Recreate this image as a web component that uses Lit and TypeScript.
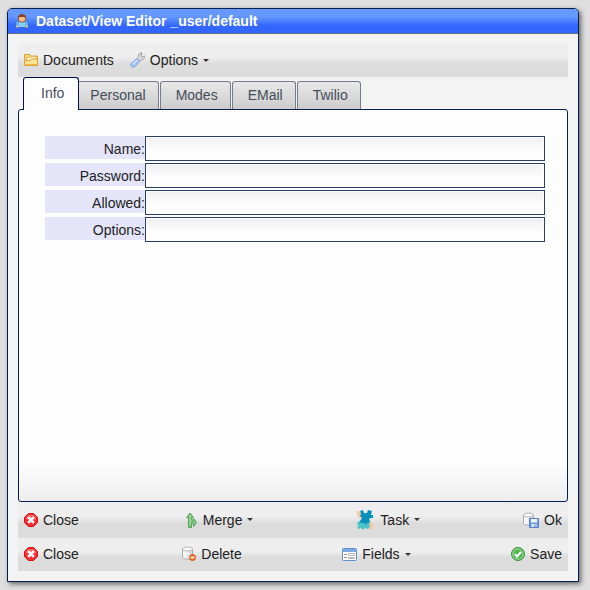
import { LitElement, html, svg, css, nothing, TemplateResult, SVGTemplateResult } from "lit";
import { customElement, property, state } from "lit/decorators.js";
import { classMap } from "lit/directives/class-map.js";

const art: Record<string, SVGTemplateResult> = {
  user: svg`
    <path d="M.5 12V9.500C.5 7.500 2 6.500 4.500 6.500h5c2.500 0 4 1 4 3V12l-2 1.500h-9z" fill="#62b4f7" stroke="#2672d2"/>
    <path d="M4.500 7h5L7 9.500z" fill="#f4c79c"/>
    <path d="M1 12.500h2.500M10.500 12.500H13" stroke="#e9b384" stroke-width="2"/>
    <path d="M4 8h6v5H4z" fill="#8accfb"/>
    <rect x="3.500" y="1" width="7" height="7" rx="2.500" fill="#f2bd8d" stroke="#94562c"/>
    <path d="M3 5V2.500Q4 0 7 0t4 2.500V5L9.500 3h-5z" fill="#86431f"/>`,
  folder: svg`
    <path d="M.5 12V1.500h5l1 1.500h7v9.500H.5z" fill="#f9d978" stroke="#d9a03f"/>
    <path d="M2.500 9V4.500H7l1-1h4v5" fill="#fff8dc" stroke="#e3b95b"/>
    <path d="M.5 12.500V7.500h6l1-1.500h6v6.500z" fill="#fbe391" stroke="#dca23d"/>
    <path d="M2 11.500h11" stroke="#f0b640"/>`,
  wrench: svg`
    <path d="M6.500 7.500l2-2C7.500 3 9.500.5 12 1l-1 2 .5 1.500 2 .5L15 3.500c.5 2.500-2 4.500-4.500 4.500l-2 2z" fill="#dcdcdc" stroke="#999"/>
    <path d="M7 6.500l2.800 2.800-5 5.400c-2.300 1.500-5-1-3.600-3.200z" fill="#a5c4f4" stroke="#7ea3de"/>
    <path d="M3 12l4.200-4" stroke="#d3e3ff" stroke-width="1.500"/>`,
  close: svg`
    <path d="M4.500.5h5l4 4v5l-4 4h-5l-4-4v-5z" fill="#f42f32" stroke="#e00c12"/>
    <path d="M4.500 2h5L12 4.500v2H2v-2z" fill="#fa6260"/>
    <path d="M4.200 4.200l5.600 5.600m0-5.600L4.200 9.800" stroke="#fff" stroke-width="2.500"/>`,
  merge: svg`
    <path d="M3.500 15.500v-10h-2L5 1l3.500 4.500h-2V7l2 2V6.500l3 4-3 4v-2.500l-2-1v4.500z" fill="#7fc684" stroke="#55a35c"/>
    <path d="M5 3v11" stroke="#a5dba5"/>`,
  data: svg`
    <path d="M.5 3v8c0 3 10 3 10 0V3z" fill="#ededed" stroke="#aaa"/>
    <path d="M2.500 4v8" stroke="#fff" stroke-width="2"/>
    <path d="M8.500 5v7" stroke="#d0d0d0" stroke-width="2"/>
    <ellipse cx="5.500" cy="3" rx="5" ry="2" fill="#fafafa" stroke="#b5b5b5"/>`,
  remove: svg`
    <circle cx="10.500" cy="11.500" r="3" fill="#f0752a" stroke="#d95511"/>
    <path d="M8.500 11.500h4" stroke="#fff" stroke-width="1.500"/>`,
  disk: svg`
    <path d="M6.500 6.500h9v9h-9z" fill="#6798e6" stroke="#5a86d0"/>
    <path d="M8 7h6v3.500H8z" fill="#f2f7ff"/>
    <path d="M8.500 12h5v3h-5z" fill="#e1edff"/>
    <path d="M12 12.500V15" stroke="#4171bd"/>`,
  puzzle: svg`
    <path d="M0 1l3 0 3 4-1 4-3-2zM13 11l4 2v4l-3 3-3-3z" fill="#f6c5a2"/>
    <path d="M2 12l3-2 9 0 0 3-1 1 1 3-2 2-3-1-2 2-2-2-3 1-1-2 2-1-2-2z" fill="#4fc1c8"/>
    <path d="M4 1l3-1 1 3h3l1-3 4 1-1 4 2 0v3l-3 0-1 2 1 2-3 1-1 2-2-2-3 0-1-2 2-3-2-2 1-2z" fill="#0891bb"/>`,
  form: svg`
    <rect x=".5" y=".5" width="14" height="12" rx="1" fill="#fff" stroke="#5c8fd0"/>
    <path d="M1 2.500h13" stroke="#7caae4" stroke-width="3"/>
    <path d="M2 6.500h3M2 9.500h3" stroke="#8f8f8f"/>
    <path d="M6.500 5.500h6v2h-6zM6.500 9.500h6v1h-6z" fill="#fff" stroke="#b5b5b5"/>`,
  check: svg`
    <circle cx="7" cy="7" r="6.500" fill="#56b652" stroke="#389240"/>
    <circle cx="7" cy="7" r="5.200" fill="none" stroke="#a8dca0"/>
    <path d="M4 7l2 2.500L10 5" fill="none" stroke="#fff" stroke-width="2"/>`,
};

function icon(names: string[], width: number, height: number): TemplateResult {
  return html`<svg width=${width} height=${height} viewBox="0 0 ${width} ${height}" aria-hidden="true">
    ${names.map((n) => art[n])}
  </svg>`;
}

interface Action {
  label: string;
  icon: TemplateResult;
  menu?: boolean;
}

@customElement("tool-bar")
class ToolBar extends LitElement {
  @property({ attribute: false }) actions: Action[] = [];
  @property({ type: Boolean, reflect: true }) spread = false;

  static styles = css`
    :host {
      display: flex;
      align-items: center;
      gap: 16px;
      box-sizing: border-box;
      min-height: 33px;
      padding: 0 6px 1px;
      background: linear-gradient(#eeeeee 40%, #dcdcdc 60%);
    }
    :host([spread]) {
      justify-content: space-between;
    }
    button {
      display: flex;
      flex: none;
      align-items: center;
      gap: 5px;
      padding: 0;
      border: 0;
      background: none;
      color: #222;
      font: 14px/20px "Liberation Sans", Arial, sans-serif;
    }
    :host([spread]) button:first-child {
      padding-right: 3px;
    }
    svg {
      display: block;
      flex: none;
    }
    .caret {
      border: 3px solid transparent;
      border-top-color: #333;
      border-bottom: 0;
    }
  `;

  render() {
    return this.actions.map(
      (a) => html`<button type="button">
        ${a.icon}<span>${a.label}</span>${a.menu ? html`<span class="caret"></span>` : nothing}
      </button>`
    );
  }
}

@customElement("app-root")
class AppRoot extends LitElement {
  @state() private tab = "Info";

  private tabs = ["Info", "Personal", "Modes", "EMail", "Twilio"];
  private fields = ["Name", "Password", "Allowed", "Options"];

  private top: Action[] = [
    { label: "Documents", icon: icon(["folder"], 14, 14) },
    { label: "Options", icon: icon(["wrench"], 15, 16), menu: true },
  ];
  private first: Action[] = [
    { label: "Close", icon: icon(["close"], 14, 14) },
    { label: "Merge", icon: icon(["merge"], 13, 16), menu: true },
    { label: "Task", icon: icon(["puzzle"], 19, 20), menu: true },
    { label: "Ok", icon: icon(["data", "disk"], 16, 16) },
  ];
  private second: Action[] = [
    { label: "Close", icon: icon(["close"], 14, 14) },
    { label: "Delete", icon: icon(["data", "remove"], 14, 16) },
    { label: "Fields", icon: icon(["form"], 15, 13), menu: true },
    { label: "Save", icon: icon(["check"], 14, 14) },
  ];

  static styles = css`
    :host {
      display: flex;
      box-sizing: border-box;
      min-height: 100vh;
      padding: 8px 11px 8px 7px;
      background: #dfdfdf;
      color: #222;
      font: 14px/20px "Liberation Sans", Arial, sans-serif;
    }
    .window {
      flex: 1;
      display: flex;
      flex-direction: column;
      border: 1px solid #001f4f;
      border-radius: 5px 5px 0 0;
      background: #f3f3f3;
      box-shadow: 2px 2px 5px #666;
    }
    header {
      display: flex;
      align-items: center;
      gap: 7px;
      height: 24px;
      padding: 0 7px;
      border-bottom: 1px solid #666f82;
      border-radius: 4px 4px 0 0;
      background: linear-gradient(#6699ff 30%, #3366ff 70%);
      color: #fff;
    }
    h1 {
      margin: 0;
      font-size: 14px;
      line-height: 20px;
    }
    .body {
      flex: 1;
      display: flex;
      flex-direction: column;
      padding: 10px;
    }
    .tabs {
      display: flex;
      align-items: flex-end;
      gap: 1px;
      padding: 0 5px;
    }
    .tab {
      height: 28px;
      padding: 0 12px 2px 15px;
      border: 1px solid #737b8c;
      border-bottom: 0;
      border-radius: 3px 3px 0 0;
      background: linear-gradient(#e8e8e8, #cccccc);
      color: #454d59;
      font: inherit;
    }
    .tab.active {
      position: relative;
      z-index: 1;
      height: 33px;
      margin: 0 -6px -1px 0;
      padding: 0 14px 2px 17px;
      border-color: #00104f;
      background: #fdfdfd;
    }
    .panel {
      flex: 1;
      padding: 26px 22px 26px 26px;
      border: 1px solid #001f4f;
      border-radius: 3px;
      background: linear-gradient(#fdfdfd 90%, #eeeeee);
    }
    .primary {
      min-height: 36px;
    }
    form {
      display: grid;
      gap: 2px;
    }
    .row {
      display: flex;
      align-items: flex-start;
    }
    label {
      box-sizing: border-box;
      width: 100px;
      height: 23px;
      padding-top: 3px;
      background: #e5e5fa;
      text-align: right;
    }
    input {
      flex: 1;
      min-width: 0;
      box-sizing: border-box;
      height: 25px;
      padding: 1px;
      border: 1px solid #2b3f63;
      border-radius: 0;
      background: linear-gradient(#f0f0f0, #fdfdfd 60%) content-box #fff;
      font: inherit;
    }
  `;

  render() {
    return html`<main class="window">
      <header>${icon(["user"], 14, 14)}<h1>Dataset/View Editor _user/default</h1></header>
      <div class="body">
        <tool-bar .actions=${this.top}></tool-bar>
        <div class="tabs" role="tablist">
          ${this.tabs.map(
            (t) => html`<button
              type="button"
              role="tab"
              aria-selected=${t === this.tab}
              class=${classMap({ tab: true, active: t === this.tab })}
              @click=${() => (this.tab = t)}
            >${t}</button>`
          )}
        </div>
        <section class="panel" role="tabpanel">
          <form>
            ${this.fields.map(
              (f) => html`<div class="row">
                <label for=${f}>${f}:</label><input id=${f} type=${f === "Password" ? "password" : "text"} />
              </div>`
            )}
          </form>
        </section>
        <tool-bar class="primary" spread .actions=${this.first}></tool-bar>
        <tool-bar spread .actions=${this.second}></tool-bar>
      </div>
    </main>`;
  }
}
